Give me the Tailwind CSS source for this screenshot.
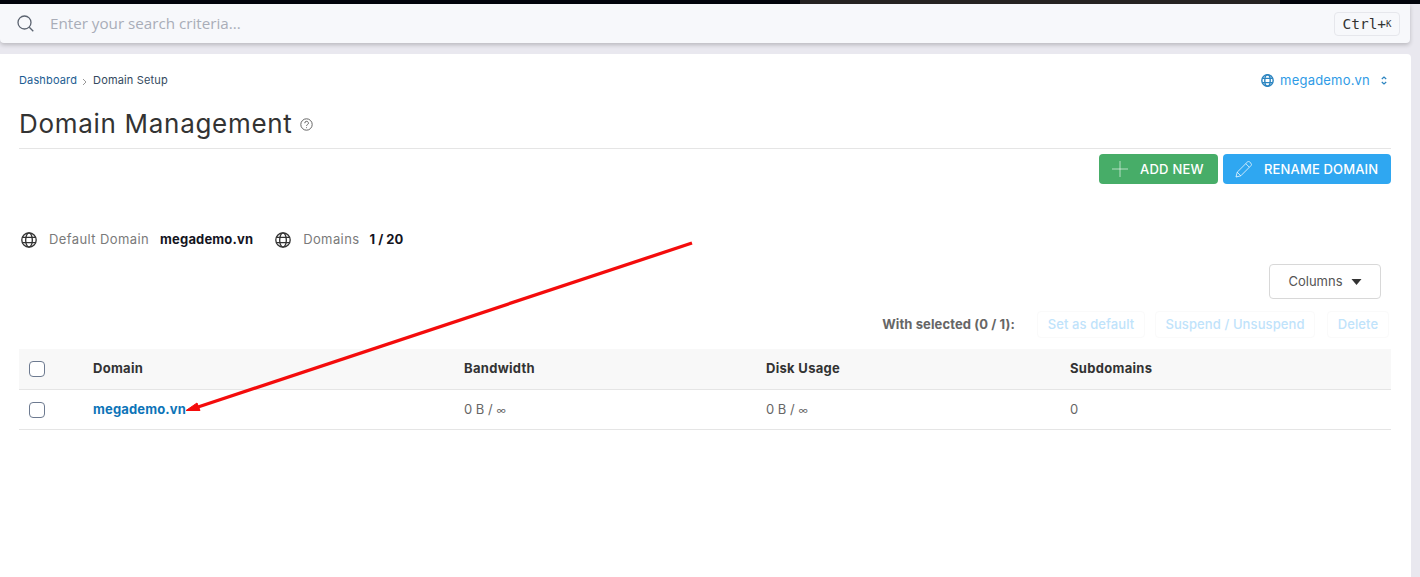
<!DOCTYPE html>
<html lang="en">
  <head>
    <meta charset="UTF-8" />
    <title>Domain Management</title>
    <script src="https://cdn.jsdelivr.net/npm/@tailwindcss/browser@4"></script>
  </head>
  <body class="relative h-[577px] overflow-hidden bg-[#e9e8ef] font-['Inter',sans-serif] text-[#333]">
    <!-- Top window strip -->
    <div class="flex h-1 bg-[#02040c]">
      <div class="w-[800px]"></div>
      <div class="w-[480px] bg-[#262322]"></div>
    </div>

    <!-- Search bar -->
    <div class="flex h-[39px] w-[1410px] items-center rounded-b-[4px] bg-[#f7f8fb] pl-[17px] pr-[10px] shadow-[0_2px_4px_rgba(0,0,0,0.2)]">
      <svg class="h-[17px] w-[17px] text-[#5c6470]" viewBox="0 0 17 17" fill="none" stroke="currentColor" stroke-width="1.3">
        <circle cx="7.5" cy="7.5" r="6.5" />
        <path d="M12.3 12.3L16.3 16.3" />
      </svg>
      <span class="ml-4 font-['Open_Sans',sans-serif] text-[15.2px] text-[#a9adb8]">Enter your search criteria...</span>
      <span class="ml-auto mt-px flex h-6 w-[66px] items-center justify-center rounded-[4px] border border-[#e6e7ec] pt-[2px] font-['DejaVu_Sans_Mono',monospace] text-[14.5px] text-[#333]">Ctrl+<span class="text-[9px]">K</span></span>
    </div>

    <!-- Main card -->
    <div class="mt-[11px] h-[523px] w-[1411px] rounded-tr-[4px] bg-white pl-[19px] pr-5">
      <div class="flex h-[53px] items-center justify-between pr-1">
        <div class="flex items-center text-[11px] tracking-[0.15px] text-[#34495e]">
          <span class="text-[#1c5d92]">Dashboard</span>
          <svg class="mx-[5px] mt-0.5 h-2 w-1.5 text-[#999]" viewBox="0 0 6 8" fill="none" stroke="currentColor"><path d="M1 1l3 3-3 3" /></svg>
          <span>Domain Setup</span>
        </div>
        <div class="flex items-center text-[13px] tracking-[0.2px] text-[#2f9be6]">
          <svg class="mr-1.5 h-[13px] w-[13px] text-[#2b84c0]" viewBox="0 0 24 24" fill="none" stroke="currentColor" stroke-width="2.6">
            <circle cx="12" cy="12" r="10.5" />
            <ellipse cx="12" cy="12" rx="5" ry="10.5" />
            <path d="M2.5 8h19M2.5 16h19" />
          </svg>
          <span>megademo.vn</span>
          <svg class="ml-[11px] h-[9px] w-[6px] text-[#2b84c0]" viewBox="0 0 6 9" fill="none" stroke="currentColor" stroke-width="1.2"><path d="M.8 3L3 1l2.2 2M.8 6L3 8l2.2-2" /></svg>
        </div>
      </div>

      <div class="flex h-[42px] items-center border-b border-[#e5e5e5] pb-[7px]">
        <h1 class="text-[26px] font-normal leading-none tracking-[0.7px] text-[#333]">Domain Management</h1>
        <svg class="ml-[7px] h-[13px] w-[13px] text-[#666]" viewBox="0 0 13 13" fill="none" stroke="currentColor">
          <circle cx="6.5" cy="6.5" r="5.7" />
          <path d="M4.8 5.2a1.8 1.8 0 1 1 2.6 1.5c-.6.3-.9.6-.9 1.2M6.5 9.3v.8" />
        </svg>
      </div>

      <div class="mt-[5px] flex justify-end gap-[5px]">
        <button class="flex h-[30px] w-[119px] items-center rounded-[4px] bg-[#47ad68] pl-[13px] text-[13px] font-medium tracking-[0.25px] text-white">
          <svg class="mr-3 h-4 w-4 text-white/60" viewBox="0 0 16 16" stroke="currentColor"><path d="M8 0v16M0 8h16" /></svg>
          <span class="pt-px">ADD NEW</span>
        </button>
        <button class="flex h-[30px] w-[168px] items-center rounded-[4px] bg-[#2fa7f1] pl-3 text-[13px] font-medium tracking-[0.15px] text-white">
          <svg class="mr-3 h-[17px] w-[17px] text-white/75" viewBox="0 0 17 17" fill="none" stroke="currentColor">
            <path d="M1 16l1.2-4.8L12.4 1a1.6 1.6 0 0 1 2.3 0l1.3 1.3a1.6 1.6 0 0 1 0 2.3L5.8 14.8zM2.2 11.2l3.6 3.6M10.8 2.7l3.5 3.5" />
          </svg>
          <span class="pt-px">RENAME DOMAIN</span>
        </button>
      </div>

      <div class="mt-[45px] flex h-[22px] items-center pl-0.5 text-[13px]">
        <svg class="h-4 w-4 text-[#333]" viewBox="0 0 24 24" fill="none" stroke="currentColor" stroke-width="2">
          <circle cx="12" cy="12" r="10.8" />
          <ellipse cx="12" cy="12" rx="5" ry="10.8" />
          <path d="M2 8h20M2 16h20" />
        </svg>
        <span class="ml-3 tracking-[0.4px] text-[#7a7a7a]">Default Domain</span>
        <span class="ml-[11px] font-bold tracking-[0.15px] text-[#14141e]">megademo.vn</span>
        <svg class="ml-[22px] h-4 w-4 text-[#333]" viewBox="0 0 24 24" fill="none" stroke="currentColor" stroke-width="2">
          <circle cx="12" cy="12" r="10.8" />
          <ellipse cx="12" cy="12" rx="5" ry="10.8" />
          <path d="M2 8h20M2 16h20" />
        </svg>
        <span class="ml-3 tracking-[0.4px] text-[#7a7a7a]">Domains</span>
        <span class="ml-[10px] font-bold text-[#14141e]">1 / 20</span>
      </div>

      <div class="mt-[13px] flex justify-end pr-2.5">
        <button class="flex h-[35px] w-28 items-center justify-center rounded-[4px] border border-[#d8d8d8] text-[13px] text-[#555]">
          <span class="pt-px">Columns</span>
          <svg class="ml-2 h-[6px] w-[11px] text-[#333]" viewBox="0 0 10 6" fill="currentColor"><path d="M0 0h10L5 6z" /></svg>
        </button>
      </div>

      <div class="mt-3 flex h-[27px] items-center justify-end pr-0.5 text-[13px] font-medium tracking-[0.1px]">
        <span class="mr-[22px] font-bold text-[#666]">With selected (0 / 1):</span>
        <span class="flex h-[27px] w-[108px] items-center justify-center rounded-[4px] border border-[#fafafa] text-[#bfe3fb]">Set as default</span>
        <span class="ml-2.5 flex h-[27px] w-[160px] items-center justify-center rounded-[4px] border border-[#fafafa] text-[#bfe3fb]">Suspend / Unsuspend</span>
        <span class="ml-3 flex h-[27px] w-[62px] items-center justify-center rounded-[4px] border border-[#fafafa] text-[#bfe3fb]">Delete</span>
      </div>

      <!-- Domains table -->
      <div class="mt-[11px] grid h-[41px] grid-cols-[74px_371px_302px_304px_1fr] items-center border-b border-[#e5e5e5] bg-[#f8f8f8] text-[13px] font-bold tracking-[0.3px] text-[#333]">
        <span class="ml-2.5 block h-4 w-4 rounded-[4px] border border-[#6d7a90] bg-white"></span>
        <span>Domain</span>
        <span>Bandwidth</span>
        <span>Disk Usage</span>
        <span>Subdomains</span>
      </div>
      <div class="grid h-10 grid-cols-[74px_371px_302px_304px_1fr] items-center border-b border-[#e5e5e5] text-[13px] text-[#666]">
        <span class="ml-2.5 block h-4 w-4 rounded-[4px] border border-[#6d7a90] bg-white"></span>
        <span class="font-bold tracking-[0.15px] text-[#0d74b8]">megademo.vn</span>
        <span>0 B / <span class="text-[10px]">∞</span></span>
        <span>0 B / <span class="text-[10px]">∞</span></span>
        <span>0</span>
      </div>
    </div>

    <!-- Red annotation arrow -->
    <svg class="absolute left-0 top-0" width="1420" height="577" fill="none">
      <path d="M692 243L198 407" stroke="#f40c0c" stroke-width="3.3" />
      <path d="M186 410.5L197 403L200 410.5z" fill="#f40c0c" stroke="#f40c0c" />
    </svg>
  </body>
</html>
